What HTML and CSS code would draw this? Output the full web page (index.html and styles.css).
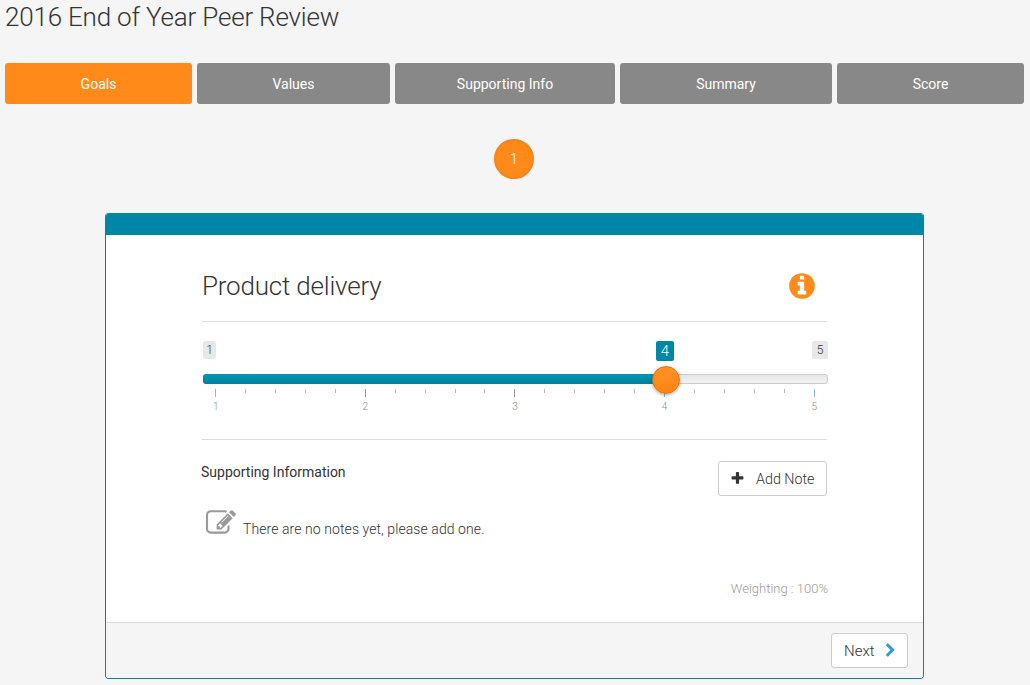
FILE: index.html
```html
<!DOCTYPE html>
<html lang="en">
<head>
    <meta charset="UTF-8">
    <meta name="viewport" content="width=device-width, initial-scale=1.0">
    <title>2016 End of Year Peer Review</title>
    <link rel="stylesheet" href="styles.css">
</head>
<body>
    <h1 class="page-title">2016 End of Year Peer Review</h1>

    <nav class="tabs">
        <a class="tab active">Goals</a>
        <a class="tab">Values</a>
        <a class="tab">Supporting Info</a>
        <a class="tab">Summary</a>
        <a class="tab">Score</a>
    </nav>

    <div class="step-row">
        <span class="step">1</span>
    </div>

    <div class="card">
        <div class="card-top"></div>

        <div class="card-body">
            <div class="goal-head">
                <h2>Product delivery</h2>
                <svg class="info-icon" viewBox="0 0 1792 1792"><path d="M1152 1376v-160q0-14-9-23t-23-9h-96v-512q0-14-9-23t-23-9h-320q-14 0-23 9t-9 23v160q0 14 9 23t23 9h96v320h-96q-14 0-23 9t-9 23v160q0 14 9 23t23 9h448q14 0 23-9t9-23zm-128-896v-160q0-14-9-23t-23-9h-192q-14 0-23 9t-9 23v160q0 14 9 23t23 9h192q14 0 23-9t9-23zm640 416q0 209-103 385.5t-279.5 279.5-385.5 103-385.5-103-279.5-279.5-103-385.5 103-385.5 279.5-279.5 385.5-103 385.5 103 279.5 279.5 103 385.5z"/></svg>
            </div>

            <!-- Slider -->
            <div class="slider">
                <div class="slider-labels">
                    <span class="limit">1</span>
                    <span class="limit limit-max">5</span>
                </div>
                <span class="value-badge">4</span>
                <div class="track">
                    <div class="track-fill"></div>
                    <div class="thumb"></div>
                </div>
                <div class="ticks">
                    <i class="tick major end"></i><i class="tick"></i><i class="tick"></i><i class="tick"></i><i class="tick"></i>
                    <i class="tick major"></i><i class="tick"></i><i class="tick"></i><i class="tick"></i><i class="tick"></i>
                    <i class="tick major"></i><i class="tick"></i><i class="tick"></i><i class="tick"></i><i class="tick"></i>
                    <i class="tick major end"></i><i class="tick"></i><i class="tick"></i><i class="tick"></i><i class="tick"></i>
                    <i class="tick major end"></i>
                </div>
                <div class="tick-labels">
                    <span>1</span><span>2</span><span>3</span><span>4</span><span>5</span>
                </div>
            </div>

            <div class="info-head">
                <h3>Supporting Information</h3>
                <button class="btn add-btn">
                    <svg class="plus-icon" viewBox="0 0 1792 1792"><path d="M1600 736v192q0 40-28 68t-68 28h-416v416q0 40-28 68t-68 28h-192q-40 0-68-28t-28-68v-416h-416q-40 0-68-28t-28-68v-192q0-40 28-68t68-28h416v-416q0-40 28-68t68-28h192q40 0 68 28t28 68v416h416q40 0 68 28t28 68z"/></svg>
                    Add Note
                </button>
            </div>

            <div class="empty-note">
                <svg class="note-icon" viewBox="0 0 1920 1792"><path d="M888 1184l116-116-152-152-116 116v56h96v96h56zm440-720q-16-16-33 1l-350 350q-17 17-1 33t33-1l350-350q17-17 1-33zm80 594v190q0 119-84.5 203.5t-203.5 84.5h-832q-119 0-203.5-84.5t-84.5-203.5v-832q0-119 84.5-203.5t203.5-84.5h832q63 0 117 25 15 7 18 23 3 17-9 29l-49 49q-14 14-32 8-23-6-45-6h-832q-66 0-113 47t-47 113v832q0 66 47 113t113 47h832q66 0 113-47t47-113v-126q0-13 9-22l64-64q15-15 35-7t20 29zm-96-738l288 288-672 672h-288v-288zm444 132l-92 92-288-288 92-92q28-28 68-28t68 28l152 152q28 28 28 68t-28 68z"/></svg>
                <span>There are no notes yet, please add one.</span>
            </div>

            <p class="weighting">Weighting : 100%</p>
        </div>

        <div class="card-footer">
            <button class="btn next-btn">
                Next
                <svg class="chevron-icon" viewBox="0 0 1792 1792"><path d="M1363 877l-742 742q-19 19-45 19t-45-19l-166-166q-19-19-19-45t19-45l531-531-531-531q-19-19-19-45t19-45l166-166q19-19 45-19t45 19l742 742q19 19 19 45t-19 45z"/></svg>
            </button>
        </div>
    </div>
</body>
</html>
```

FILE: styles.css
```css
html, body {
    height: 685px;
    overflow: hidden;
}

body {
    font-family: 'Roboto', 'Liberation Sans', sans-serif;
    font-weight: 300;
    margin: 0;
    background-color: #f5f5f5;
    color: #333;
}

.page-title {
    margin: 0;
    padding-left: 5px;
    height: 63px;
    font-size: 26px;
    line-height: 34px;
    font-weight: 300;
    letter-spacing: -0.2px;
}

/* Tabs */
.tabs {
    display: grid;
    grid-template-columns: 187fr 193fr 220fr 212fr 187fr;
    column-gap: 5px;
    margin: 0 6px 0 5px;
}

.tab {
    height: 41px;
    line-height: 43px;
    text-align: center;
    font-size: 14px;
    font-weight: 400;
    color: #fff;
    background-color: #888;
    border-radius: 3px;
}

.tab.active {
    background-color: #ff8a1a;
}

.step-row {
    display: flex;
    justify-content: center;
    padding: 35px 2px 34px 0;
}

.step {
    width: 40px;
    height: 40px;
    box-sizing: border-box;
    border: 2px solid #f5841b;
    border-radius: 50%;
    background-color: #ff8a1a;
    color: #fff;
    font-size: 15px;
    line-height: 36px;
    text-align: center;
}

/* Card */
.card {
    width: 819px;
    margin-left: 105px;
    box-sizing: border-box;
    background-color: #fff;
    border: 1px solid #0086a6;
    border-top: none;
    border-radius: 4px;
    overflow: hidden;
}

.card-top {
    height: 22px;
    background-color: #0086a6;
}

.card-body {
    padding: 0 96px 0 96px;
    height: 387px;
}

.goal-head {
    display: flex;
    justify-content: space-between;
    align-items: center;
    height: 87px;
    box-sizing: border-box;
    border-bottom: 1px solid #ddd;
    padding: 15px 10px 0 0;
}

.goal-head h2 {
    margin: 0;
    font-size: 26px;
    font-weight: 300;
    letter-spacing: -0.2px;
}

.info-icon {
    width: 30px;
    height: 30px;
    margin-top: 1px;
    fill: #ff8a1a;
}

/* Slider */
.slider {
    position: relative;
    height: 118px;
    box-sizing: border-box;
    border-bottom: 1px solid #ddd;
    padding: 19px 0 0 1px;
}

.slider-labels {
    display: flex;
    justify-content: space-between;
    height: 33px;
    margin-right: -1px;
}

.limit {
    width: 13px;
    height: 18px;
    text-align: center;
    font-size: 12px;
    line-height: 18px;
    background-color: #e8e8e8;
    border-radius: 3px;
}

.limit-max {
    width: 16px;
}

.value-badge {
    position: absolute;
    left: 454px;
    top: 19px;
    width: 18px;
    height: 20px;
    text-align: center;
    font-size: 15px;
    line-height: 20px;
    color: #fff;
    background-color: #0086a6;
    border-radius: 2px;
}

.track {
    position: relative;
    height: 10px;
    margin-right: -1px;
    box-sizing: border-box;
    background: linear-gradient(#e6e6e6, #f2f2f2);
    border: 1px solid #ccc;
    border-radius: 3px;
}

.track-fill {
    width: 74.5%;
    height: 10px;
    margin: -1px 0 0 -1px;
    background: linear-gradient(#0097b5, #00809f);
    border-radius: 3px 0 0 3px;
}

.thumb {
    position: absolute;
    left: 448px;
    top: -9px;
    width: 28px;
    height: 28px;
    box-sizing: border-box;
    border: 1px solid #d9730f;
    border-radius: 50%;
    background: linear-gradient(#ff9126, #ff8412);
    box-shadow: 0 1px 3px rgba(0, 0, 0, 0.35);
}

.ticks {
    display: flex;
    justify-content: space-between;
    height: 8px;
    margin: 5px 12px 0 12px;
}

.tick {
    width: 1px;
    height: 4px;
    background-color: #bbb;
}

.tick.major {
    height: 8px;
    background-color: #999;
}

.tick.major.end {
    background-color: #7fc0d0;
}

.tick-labels {
    display: flex;
    justify-content: space-between;
    margin: 4px 10px 0 10px;
    font-size: 10px;
    line-height: 12px;
    color: #888;
}

/* Notes */
.info-head {
    display: flex;
    justify-content: space-between;
    align-items: flex-start;
    padding-top: 21px;
}

.info-head h3 {
    margin: 3px 0 0 -1px;
    font-size: 14px;
    font-weight: 400;
    color: #333;
}

.btn {
    display: inline-flex;
    align-items: center;
    height: 35px;
    box-sizing: border-box;
    background-color: #fff;
    border: 1px solid #ccc;
    border-radius: 3px;
    font-family: inherit;
    font-weight: 300;
    font-size: 15px;
    color: #333;
}

.add-btn {
    width: 109px;
    padding: 0 0 0 11px;
    font-size: 14.3px;
}

.plus-icon {
    width: 15px;
    height: 15px;
    margin-right: 11px;
    fill: #333;
}

.empty-note {
    display: flex;
    align-items: flex-end;
    margin: 12px 0 0 3px;
    font-size: 14px;
    letter-spacing: 0.08px;
}

.note-icon {
    width: 34px;
    height: 30px;
    fill: #999;
}

.empty-note span {
    margin: 0 0 1px 4px;
}

.weighting {
    margin: 43px -1px 0 0;
    text-align: right;
    font-size: 13px;
    color: #999;
}

.card-footer {
    display: flex;
    justify-content: flex-end;
    align-items: flex-start;
    height: 56px;
    box-sizing: border-box;
    padding: 10px 15px 0 0;
    background-color: #f5f5f5;
    border-top: 1px solid #ddd;
}

.next-btn {
    width: 77px;
    padding: 0 0 0 12px;
}

.chevron-icon {
    width: 15px;
    height: 15px;
    margin-left: 8px;
    fill: #3498db;
}
```
